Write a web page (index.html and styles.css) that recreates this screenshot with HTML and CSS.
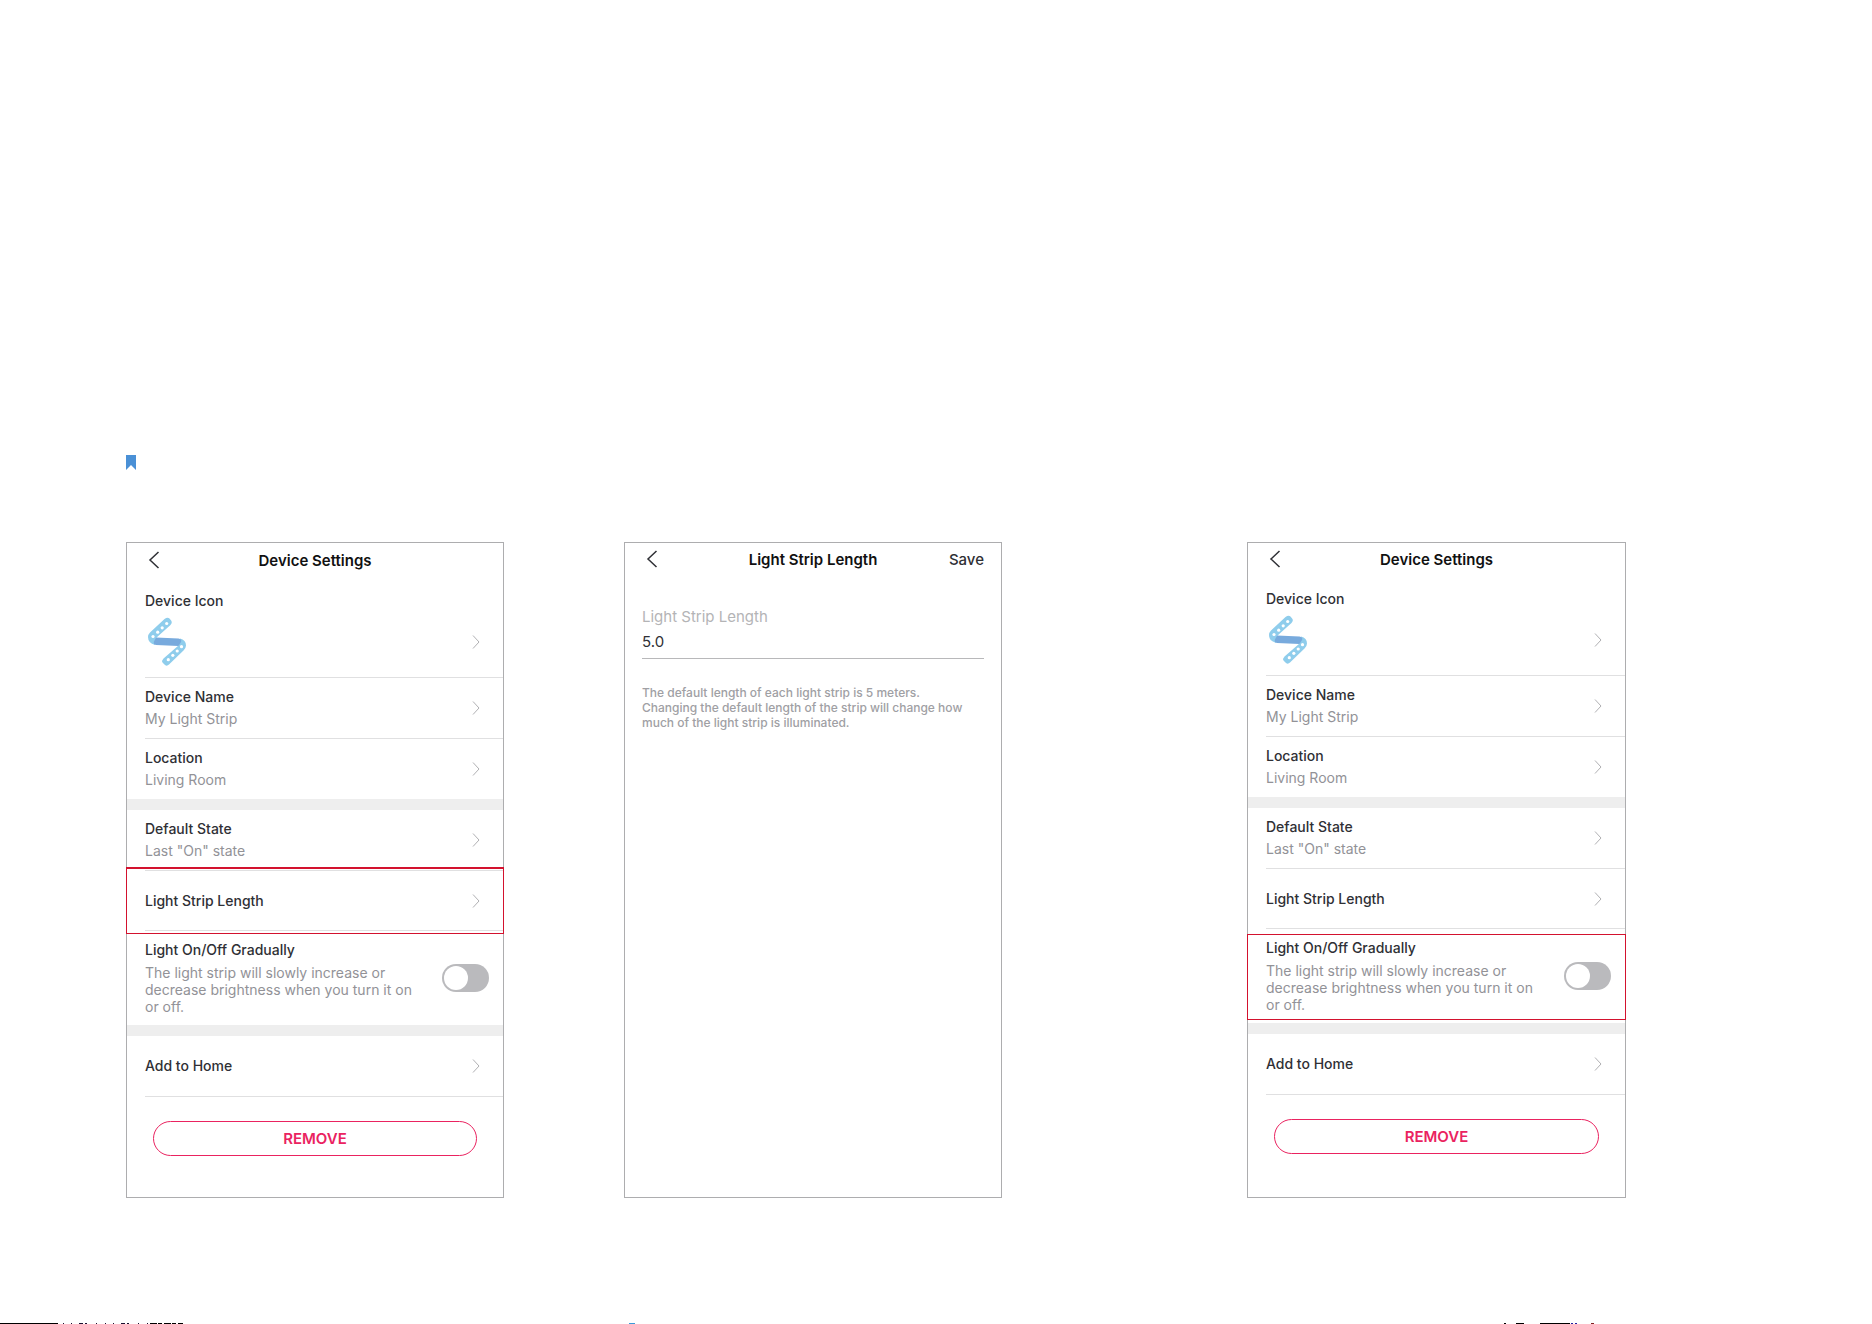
FILE: index.html
```html
<!doctype html>
<html lang="en">
    <head>
        <meta charset="UTF-8" />
        <meta name="viewport" content="width=device-width, initial-scale=1.0" />
        <title>Light Strip - Device Settings</title>
        <link rel="stylesheet" href="styles.css">
    </head>
    <body>
        <!-- shared icons -->
        <svg class="icon-defs" aria-hidden="true">
            <symbol id="back" viewBox="0 0 12 18">
                <path d="M10.5 1 L2 9 L10.5 17" fill="none" stroke="currentColor" stroke-width="1.5" />
            </symbol>
            <symbol id="chevron" viewBox="0 0 8 14">
                <path d="M1 0.5 L7 7 L1 13.5" fill="none" stroke="currentColor" stroke-width="1" />
            </symbol>
            <symbol id="strip" viewBox="0 0 40 50">
                <path d="M17.500 2 Q20.500 0 22.500 1.500 L24.500 4 Q25.500 6 23.500 8 L9 21 L8 28 Q1 26 1 20 Q1 17.500 3 15.500 Z" fill="#8fcdec" />
                <path d="M33 21.500 Q39 23 39 28.500 Q39 31 36.500 33.500 L22 47.500 Q20 49.500 18 48 L15.500 45.500 Q14.500 43.500 16.500 41.500 L31.500 28.500 Z" fill="#8fcdec" />
                <path d="M9 20.500 L31.500 21.500 Q35 22 34 25 L31.500 29 L9 28 Q6 27.500 7 24.500 Z" fill="#78aadd" />
                <g fill="#fff">
                    <circle cx="19.700" cy="6.500" r="1.600" />
                    <circle cx="15.200" cy="10.800" r="1.600" />
                    <circle cx="10.700" cy="15.200" r="1.600" />
                    <circle cx="6" cy="19.500" r="1.600" />
                    <circle cx="34.500" cy="29.700" r="1.600" />
                    <circle cx="30.200" cy="34" r="1.600" />
                    <circle cx="25.800" cy="38.300" r="1.600" />
                    <circle cx="21.300" cy="42.700" r="1.600" />
                </g>
            </symbol>
        </svg>

        <main class="page">
            <svg class="bookmark" viewBox="0 0 10 15" aria-hidden="true">
                <path d="M0 0 H10 V15 L5 10 L0 15 Z" fill="#4a90d6" />
            </svg>

            <div class="steps">
                <div class="step">
                    <section class="screen">
                        <header class="bar bar-tall">
                            <button class="back" aria-label="Back"><svg><use href="#back" /></svg></button>
                            <h2>Device Settings</h2>
                        </header>
                        <button class="row row-icon">
                            <span class="name">Device Icon</span>
                            <span class="icon-line">
                                <svg class="strip"><use href="#strip" /></svg>
                                <svg class="chevron"><use href="#chevron" /></svg>
                            </span>
                        </button>
                        <button class="row">
                            <span class="text">
                                <span class="name">Device Name</span>
                                <span class="value">My Light Strip</span>
                            </span>
                            <svg class="chevron"><use href="#chevron" /></svg>
                        </button>
                        <button class="row last">
                            <span class="text">
                                <span class="name">Location</span>
                                <span class="value">Living Room</span>
                            </span>
                            <svg class="chevron"><use href="#chevron" /></svg>
                        </button>
                        <div class="band"></div>
                        <button class="row">
                            <span class="text">
                                <span class="name">Default State</span>
                                <span class="value">Last "On" state</span>
                            </span>
                            <svg class="chevron"><use href="#chevron" /></svg>
                        </button>
                        <div class="marked mark-length">
                            <button class="row row-single">
                                <span class="name">Light Strip Length</span>
                                <svg class="chevron"><use href="#chevron" /></svg>
                            </button>
                        </div>
                        <div class="row row-toggle last">
                            <label class="text" for="gradual-a">
                                <span class="name">Light On/Off Gradually</span>
                                <span class="desc">The light strip will slowly increase or decrease brightness when you turn it on or off.</span>
                            </label>
                            <input type="checkbox" class="toggle" id="gradual-a">
                        </div>
                        <div class="band"></div>
                        <button class="row">
                            <span class="name">Add to Home</span>
                            <svg class="chevron"><use href="#chevron" /></svg>
                        </button>
                        <button class="remove">REMOVE</button>
                    </section>

                    <section class="screen">
                        <header class="bar">
                            <button class="back" aria-label="Back"><svg><use href="#back" /></svg></button>
                            <h2>Light Strip Length</h2>
                            <button class="save">Save</button>
                        </header>
                        <form class="length-form">
                            <label for="length">Light Strip Length</label>
                            <input type="text" id="length" value="5.0">
                            <p>The default length of each light strip is 5 meters.<br>Changing the default length of the strip will change how much of the light strip is illuminated.</p>
                        </form>
                    </section>
                </div>

                <div class="step">
                    <section class="screen">
                        <header class="bar">
                            <button class="back" aria-label="Back"><svg><use href="#back" /></svg></button>
                            <h2>Device Settings</h2>
                        </header>
                        <button class="row row-icon">
                            <span class="name">Device Icon</span>
                            <span class="icon-line">
                                <svg class="strip"><use href="#strip" /></svg>
                                <svg class="chevron"><use href="#chevron" /></svg>
                            </span>
                        </button>
                        <button class="row">
                            <span class="text">
                                <span class="name">Device Name</span>
                                <span class="value">My Light Strip</span>
                            </span>
                            <svg class="chevron"><use href="#chevron" /></svg>
                        </button>
                        <button class="row last">
                            <span class="text">
                                <span class="name">Location</span>
                                <span class="value">Living Room</span>
                            </span>
                            <svg class="chevron"><use href="#chevron" /></svg>
                        </button>
                        <div class="band"></div>
                        <button class="row">
                            <span class="text">
                                <span class="name">Default State</span>
                                <span class="value">Last "On" state</span>
                            </span>
                            <svg class="chevron"><use href="#chevron" /></svg>
                        </button>
                        <button class="row row-single">
                            <span class="name">Light Strip Length</span>
                            <svg class="chevron"><use href="#chevron" /></svg>
                        </button>
                        <div class="marked mark-gradual">
                            <div class="row row-toggle last">
                                <label class="text" for="gradual-b">
                                    <span class="name">Light On/Off Gradually</span>
                                    <span class="desc">The light strip will slowly increase or decrease brightness when you turn it on or off.</span>
                                </label>
                                <input type="checkbox" class="toggle" id="gradual-b">
                            </div>
                        </div>
                        <div class="band"></div>
                        <button class="row">
                            <span class="name">Add to Home</span>
                            <svg class="chevron"><use href="#chevron" /></svg>
                        </button>
                        <button class="remove">REMOVE</button>
                    </section>
                </div>
            </div>
        </main>

        <svg class="edge" aria-hidden="true">
            <g stroke="#000" stroke-width="1">
                <path d="M0 0.5 H58" />
                <path d="M63 0.5 H150" stroke="#1a1030" stroke-dasharray="1 7 1 7 4 2 2 9 1 8" />
                <path d="M150 0.5 H183" stroke-dasharray="7 1 4 2" />
                <path d="M629 0.5 H635" stroke="#3a9ad9" />
                <path d="M1504 0.5 H1506 M1516 0.5 H1524 M1540 0.5 H1570" />
                <path d="M1571 0.5 H1579" stroke-dasharray="2 2" stroke="#2020a0" />
                <path d="M1591 0.5 H1594" stroke="#802020" />
            </g>
        </svg>
    </body>
</html>
```
FILE: styles.css
```css
* {
    box-sizing: border-box;
}

body {
    font-family: Inter, "Liberation Sans", sans-serif;
    margin: 0;
    min-height: 100vh;
    display: flex;
    flex-direction: column;
    background-color: #fff;
    color: #2f3035;
}

button {
    font: inherit;
    color: inherit;
    background: none;
    border: none;
    padding: 0;
    cursor: pointer;
}

svg {
    display: block;
}

.icon-defs {
    position: absolute;
    width: 0;
    height: 0;
}

.page {
    padding: 455px 246px 40px 126px;
}

.bookmark {
    width: 10px;
    height: 15px;
    margin-bottom: 72px;
}

.steps {
    display: grid;
    grid-template-columns: 876fr 379fr;
    gap: 245px;
}

.step {
    display: flex;
    gap: 120px;
}

.screen {
    flex: 1;
    min-width: 0;
    min-height: 656px;
    border: 1px solid #adadaf;
}

.bar {
    display: grid;
    grid-template-columns: 60px 1fr 60px;
    align-items: center;
    height: 34px;
    padding: 0 17px 1px;
}

.bar-tall {
    height: 37px;
    margin-bottom: -1px;
}

.bar h2 {
    margin: 0;
    font-size: 15px;
    line-height: 22px;
    font-weight: 600;
    text-align: center;
    color: #111;
}

.back svg {
    width: 12px;
    height: 18px;
    margin: 0 0 2px 4px;
}

.save {
    font-size: 15px;
    line-height: 22px;
    font-weight: 500;
    text-align: right;
}

.row {
    display: flex;
    align-items: center;
    justify-content: space-between;
    width: calc(100% - 18px);
    height: 61px;
    margin-left: 18px;
    padding-right: 23px;
    border-bottom: 1px solid #e0e0e1;
    text-align: left;
}

.row.last {
    height: 60px;
    border-bottom: none;
}

.row-single {
    height: 60px;
}

.row-icon {
    height: 99px;
    flex-direction: column;
    align-items: stretch;
    justify-content: flex-start;
    padding-top: 11px;
}

.icon-line {
    display: flex;
    align-items: center;
    justify-content: space-between;
    margin-top: 5px;
}

.strip {
    width: 40px;
    height: 50px;
    margin-left: 2px;
}

.chevron {
    width: 8px;
    height: 14px;
    color: #b0b0b3;
}

.name,
.value,
.desc {
    display: block;
    font-size: 14px;
    line-height: 22px;
}

.name {
    font-weight: 500;
}

.value,
.desc {
    color: #929297;
}

.desc {
    max-width: 275px;
    margin-top: 3px;
    line-height: 17px;
}

.row-toggle.last {
    height: 94px;
    padding-right: 14px;
}

.row-toggle .text {
    padding-bottom: 3px;
}

.toggle {
    appearance: none;
    flex: none;
    width: 47px;
    height: 28px;
    margin: 0;
    padding: 2px;
    border-radius: 14px;
    background-color: #bababd;
    cursor: pointer;
}

.toggle::before {
    content: "";
    display: block;
    width: 24px;
    height: 24px;
    border-radius: 50%;
    background-color: #fff;
}

.toggle:checked::before {
    margin-left: auto;
}

.band {
    height: 11px;
    background-color: #eee;
}

/* red frame drawn over the highlighted row */
.marked {
    position: relative;
}

.marked::after {
    content: "";
    position: absolute;
    left: -1px;
    right: -1px;
    border: 1px solid #d3122e;
    pointer-events: none;
}

.mark-length::after {
    top: -4px;
    bottom: -3px;
    border-top-width: 2px;
}

.mark-gradual::after {
    top: 5px;
    bottom: 3px;
}

.remove {
    display: block;
    width: calc(100% - 52px);
    height: 35px;
    margin: 24px auto 40px 26px;
    border: 1px solid #ea2360;
    border-radius: 18px;
    color: #ea2360;
    font-size: 15px;
    font-weight: 600;
}

.length-form {
    padding: 29px 17px;
}

.length-form label {
    display: block;
    font-size: 15px;
    line-height: 22px;
    color: #b4b4b6;
}

.length-form input {
    display: block;
    width: 100%;
    height: 31px;
    padding: 0 0 4px;
    border: none;
    border-bottom: 1px solid #b8b8ba;
    font: inherit;
    font-size: 15px;
    color: #2f3035;
}

.length-form p {
    margin: 26px 0 0;
    font-size: 12px;
    font-weight: 500;
    line-height: 15px;
    color: #a0a0a4;
}

.edge {
    width: 100%;
    height: 1px;
    margin-top: auto;
}
```
